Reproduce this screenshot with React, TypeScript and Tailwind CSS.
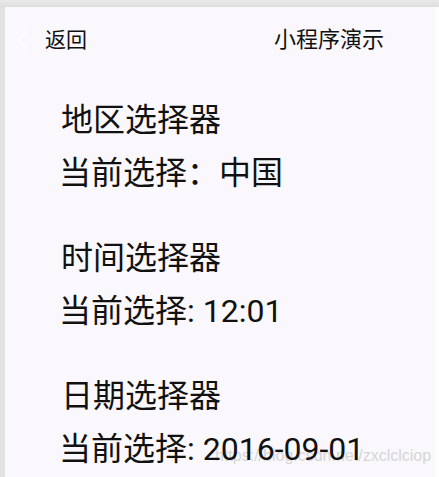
import { ReactNode } from 'react';

const font = { fontFamily: 'Roboto, "Noto Sans CJK SC", sans-serif' };

function Section({ title, value, first }: { title: string; value: ReactNode; first?: boolean }) {
  return (
    <div className={`relative pl-[54px] ${first ? 'mt-[49px]' : 'mt-[45px]'}`}>
      <div className="text-[32px] leading-[40px] text-[#111] pl-[2px]">{title}</div>
      <div className="mt-[13px] text-[32px] leading-[40px] text-[#111]">{value}</div>
    </div>
  );
}

export default function App() {
  return (
    <div className="w-[439px] h-[477px] bg-[#e4e4e4] flex flex-col overflow-hidden" style={font}>
      <div className="h-[7px] bg-gradient-to-b from-[#e9e9e9] to-[#dedede]" />
      <div className="flex flex-1">
        <div className="w-[5px] bg-[#e2e2e2]" />
        <div className="relative flex-1 bg-[#faf8fd]">
          {/* watermark, painted under the text */}
          <div
            className="absolute left-[210px] top-[439px] text-[16px] leading-[20px] text-[#d6d6d6]"
            style={{ fontFamily: '"Liberation Sans", Arial, sans-serif' }}
          >
            https://blog.csdn.net/zxclclciop
          </div>

          {/* header */}
          <div className="relative flex items-center h-[44px] pt-[21px]">
            <svg className="ml-[11px] w-[14px] h-[22px]" viewBox="0 0 14 22" fill="none">
              <path d="M12 1 L2 11 L12 21" stroke="#ffffff" strokeWidth="1.6" />
            </svg>
            <span className="ml-[15px] text-[21px] leading-[22px] text-[#111]">返回</span>
            <span className="ml-auto mr-[51px] text-[22px] leading-[22px] text-[#111]">小程序演示</span>
          </div>

          <Section first title="地区选择器" value="当前选择：中国" />
          <Section title="时间选择器" value="当前选择: 12:01" />
          <Section title="日期选择器" value="当前选择: 2016-09-01" />
        </div>
        <div className="w-[4px] bg-white" />
      </div>
    </div>
  );
}
